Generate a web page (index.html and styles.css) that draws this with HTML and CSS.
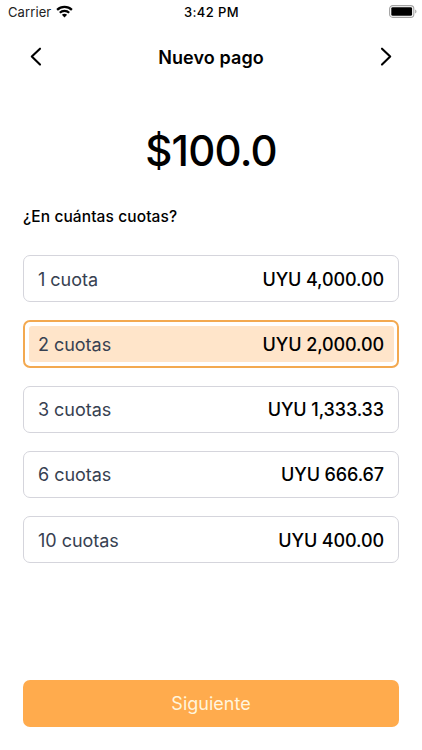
FILE: index.html
```html
<!DOCTYPE html>
<html lang="es">
<head>
<meta charset="utf-8">
<title>Nuevo pago</title>
<link rel="stylesheet" href="styles.css">
</head>
<body>
<div class="screen">
  <div class="status">
    <div class="carrier"><span class="carrier-name">Carrier</span>
      <svg class="wifi" width="17" height="13" viewBox="0 0 17 13" fill="none" stroke="#000" stroke-width="2.2"><path d="M1.1 4.9C5.2 .9 11.8 .9 15.9 4.9M3.8 7.7C6.4 5.2 10.6 5.2 13.2 7.7"/><path d="M8.5 12.4L5.9 9.8C7.4 8.5 9.6 8.5 11.1 9.8Z" fill="#000" stroke="none"/></svg>
    </div>
    <span class="time">3:42 PM</span>
    <svg class="battery" width="28" height="13" viewBox="0 0 28 13"><rect x=".6" y=".6" width="24.2" height="11.8" rx="3.2" fill="#fff" stroke="#a3a3a3" stroke-width="1.1"/><rect x="2.3" y="2.2" width="20.8" height="8.6" rx="1.4"/><path d="M26.2 4.6v4c1.7-.7 1.7-3.3 0-4Z" fill="#a3a3a3"/></svg>
  </div>
  <header class="header">
    <svg width="12" height="20" viewBox="0 0 12 20" fill="none" stroke="#000" stroke-width="2.1" stroke-linecap="round" stroke-linejoin="round"><path d="M10 1.7L1.8 9.6L10 17.6"/></svg>
    <h1 class="title">Nuevo pago</h1>
    <svg width="12" height="20" viewBox="0 0 12 20" fill="none" stroke="#000" stroke-width="2.1" stroke-linecap="round" stroke-linejoin="round"><path d="M2 1.7L10.2 9.6L2 17.6"/></svg>
  </header>
  <div class="amount">$100.0</div>
  <h2 class="question">¿En cuántas cuotas?</h2>
  <div class="options">
    <div class="option"><span class="label">1 cuota</span><span class="price">UYU 4,000.00</span></div>
    <div class="option selected"><div class="fill"><span class="label">2 cuotas</span><span class="price">UYU 2,000.00</span></div></div>
    <div class="option"><span class="label">3 cuotas</span><span class="price">UYU 1,333.33</span></div>
    <div class="option"><span class="label">6 cuotas</span><span class="price">UYU 666.67</span></div>
    <div class="option"><span class="label">10 cuotas</span><span class="price">UYU 400.00</span></div>
  </div>
  <button class="next">Siguiente</button>
</div>
</body>
</html>
```
FILE: styles.css
```css
* { box-sizing: border-box; }
body { margin: 0; background: #fff; font-family: Inter, sans-serif; color: #000; }
.screen { display: flex; flex-direction: column; height: 750px; padding: 0 23px 23px; }
.status { display: grid; grid-template-columns: 1fr auto 1fr; align-items: center; height: 23px; margin: 0 -16px 0 -15px; }
.carrier { display: flex; align-items: center; gap: 5px; }
.carrier-name { font-size: 13px; letter-spacing: .1px; color: #222; }
.time { font-size: 13px; font-weight: 500; letter-spacing: .4px; }
.battery { justify-self: end; margin-right: -2px; }
.header { display: flex; align-items: center; justify-content: space-between; height: 67px; padding: 0 7px; }
.title { margin: 2px 0 0; font-size: 18px; font-weight: 600; line-height: 24px; letter-spacing: .1px; }
.amount { margin-top: 31px; height: 60px; line-height: 60px; text-align: center; font-size: 42px; font-weight: 500; letter-spacing: -.8px; }
.question { margin: 24px 0 0; height: 24px; line-height: 24px; font-size: 15.5px; font-weight: 500; letter-spacing: .1px; }
.options { display: grid; gap: 18px; margin-top: 26.3px; }
.option { display: flex; align-items: center; justify-content: space-between; height: 47.2px; padding: 1px 14px 0; border: 1px solid #d5d5dc; border-radius: 7px; font-size: 18px; }
.selected { padding: 3.5px; border: 2px solid #f3a950; }
.fill { display: flex; flex: 1; align-items: center; justify-content: space-between; height: 100%; padding: 0 9.5px; border-radius: 3px; background: #ffe5ca; }
.label { color: #374151; letter-spacing: -.03px; }
.price { font-weight: 500; letter-spacing: -.1px; }
.next { margin-top: auto; height: 47px; border: 0; border-radius: 7px; background: #ffab4d; color: #fff5dc; font: 400 18px Inter, sans-serif; }
```
